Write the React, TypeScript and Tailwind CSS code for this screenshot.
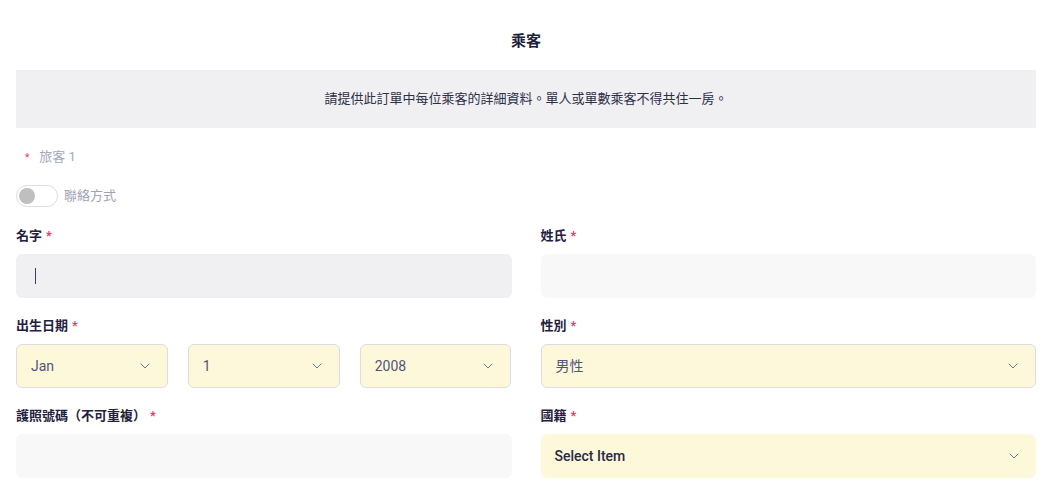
import { ChevronDown } from 'lucide-react'

const FONT = { fontFamily: "Roboto, 'Noto Sans CJK TC', 'Noto Sans', sans-serif" }

function Label({ text }: { text: string }) {
  return (
    <div className="flex h-5 items-center text-[13px] font-semibold text-[#1f2140]">
      <span>{text}</span>
      <span className="ml-1 text-[#f0306a]">*</span>
    </div>
  )
}

function SelectBox({ value, bordered = true, strong = false }: { value: string; bordered?: boolean; strong?: boolean }) {
  return (
    <div
      className={`flex h-[44px] items-center justify-between rounded-md bg-[#fef8da] pl-[14px] pr-[14px] ${
        bordered ? 'border border-[#dcdde4]' : ''
      }`}
    >
      <span className={strong ? 'text-sm font-medium text-[#272a45]' : 'text-sm text-[#50557a]'}>{value}</span>
      <ChevronDown size={16} strokeWidth={1.5} className="text-[#6e7390]" />
    </div>
  )
}

export default function App() {
  return (
    <div className="min-h-screen bg-white" style={FONT}>
      <div className="ml-4 w-[1020px]">
        <h1 className="pt-[30px] text-center text-[15px] leading-[22px] font-bold text-[#1e1f3a]">乘客</h1>

        <div className="mt-[18px] flex h-[58px] items-center justify-center bg-[#f0f0f3] text-[13px] text-[#2d2f48]">
          請提供此訂單中每位乘客的詳細資料。單人或單數乘客不得共住一房。
        </div>

        <div className="mt-[19px] flex h-5 items-center text-[13px] text-[#a3a8bb]">
          <span className="ml-[9px] text-[10px] text-[#f0306a]">*</span>
          <span className="ml-[10px]">旅客 1</span>
        </div>

        <div className="mt-[18px] flex items-center">
          <div className="flex h-[22px] w-[42px] items-center rounded-full border border-[#dcdde6] bg-white pl-[2px]">
            <div className="h-[16px] w-[16px] rounded-full bg-[#bfbfbf]" />
          </div>
          <span className="ml-[6px] text-[13px] text-[#9ea3b5]">聯絡方式</span>
        </div>

        <div className="mt-[19px] grid grid-cols-2 gap-x-[29px] gap-y-[18px]">
          <div>
            <Label text="名字" />
            <div className="mt-2 flex h-[44px] items-center rounded-md bg-[#f0f0f3] pl-[19px]">
              <div className="h-4 w-px bg-[#3b3f6b]" />
            </div>
          </div>
          <div>
            <Label text="姓氏" />
            <div className="mt-2 h-[44px] rounded-md bg-[#f8f8f8]" />
          </div>

          <div>
            <Label text="出生日期" />
            <div className="mt-2 grid grid-cols-3 gap-5">
              <SelectBox value="Jan" />
              <SelectBox value="1" />
              <SelectBox value="2008" />
            </div>
          </div>
          <div>
            <Label text="性別" />
            <div className="mt-2">
              <SelectBox value="男性" />
            </div>
          </div>

          <div>
            <Label text="護照號碼（不可重複）" />
            <div className="mt-2 h-[44px] rounded-md bg-[#f8f8f8]" />
          </div>
          <div>
            <Label text="國籍" />
            <div className="mt-2">
              <SelectBox value="Select Item" bordered={false} strong />
            </div>
          </div>
        </div>
      </div>
    </div>
  )
}
